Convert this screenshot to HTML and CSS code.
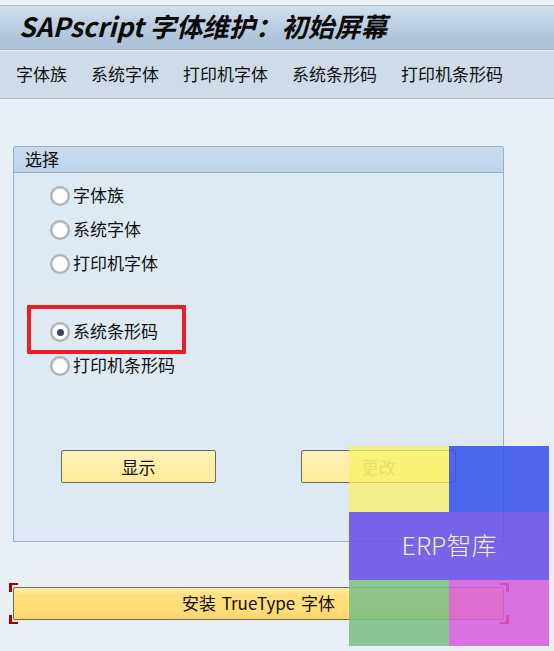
FILE: index.html
```html
<!DOCTYPE html>
<html lang="zh-CN">
<head>
    <meta charset="UTF-8">
    <meta name="viewport" content="width=device-width, initial-scale=1.0">
    <title>SAPscript 字体维护</title>
    <link rel="stylesheet" href="styles.css">
</head>
<body>
    <div class="topstrip"></div>
    <h1 class="titlebar">SAPscript 字体维护：初始屏幕</h1>
    <nav class="toolbar">
        <span>字体族</span>
        <span>系统字体</span>
        <span>打印机字体</span>
        <span>系统条形码</span>
        <span>打印机条形码</span>
    </nav>

    <main class="content">
        <section class="panel">
            <div class="panel-head">选择</div>
            <div class="panel-body">
                <div class="options">
                    <label class="option"><span class="radio"></span>字体族</label>
                    <label class="option"><span class="radio"></span>系统字体</label>
                    <label class="option"><span class="radio"></span>打印机字体</label>
                    <label class="option option-picked"><span class="radio radio-on"></span>系统条形码<span class="redbox"></span></label>
                    <label class="option"><span class="radio"></span>打印机条形码</label>
                </div>
                <div class="actions">
                    <button class="btn">显示</button>
                    <button class="btn btn-off">更改</button>
                </div>
            </div>
        </section>

        <button class="btn btn-install">
            安装 TrueType 字体
            <span class="corner c-tl"></span>
            <span class="corner c-bl"></span>
            <span class="corner c-tr"></span>
            <span class="corner c-br"></span>
        </button>
    </main>

    <div class="watermark">
        <div class="wm wm-yellow"></div>
        <div class="wm wm-blue"></div>
        <div class="wm wm-purple">ERP智库</div>
        <div class="wm wm-green"></div>
        <div class="wm wm-pink"></div>
    </div>
</body>
</html>
```

FILE: styles.css
```css
*{
    padding: 0;
    margin: 0;
    box-sizing: border-box;
}
body{
    height: 651px;
    overflow: hidden;
    position: relative;
    background-color: #e8eff7;
    font-family: "Noto Sans CJK SC", "Liberation Sans", sans-serif;
    font-size: 17px;
    color: #111;
}
.topstrip{
    height: 6px;
    background-color: #eef1f8;
    border-bottom: 1px solid #b4bccb;
}
.titlebar{
    height: 44px;
    padding-left: 19px;
    background: linear-gradient(#d3e0ed, #aec4da 75%, #abc2d9);
    border-bottom: 1px solid #9fb3c8;
    font-size: 26.4px;
    line-height: 39px;
    font-style: italic;
    font-weight: 700;
    color: #0a0a0a;
    white-space: nowrap;
}
.toolbar{
    height: 49px;
    padding-left: 16px;
    padding-bottom: 2px;
    display: flex;
    align-items: center;
    gap: 24px;
    background-color: #cfdce7;
    border-top: 1px solid #e3ebf3;
    border-bottom: 1px solid #aab9c9;
}
.content{
    padding: 47px 50px 0 13px;
}
.panel{
    border: 1px solid #95b0cf;
    border-radius: 2px 2px 0 0;
    height: 396px;
    display: flex;
    flex-direction: column;
}
.panel-head{
    height: 26px;
    padding-left: 11px;
    line-height: 23px;
    background: linear-gradient(#c9dcef, #bcd4e9);
    border-bottom: 1px solid #8fabc9;
}
.panel-body{
    flex: 1;
    background-color: #dde9f3;
    padding: 10px 0 0 36px;
    display: flex;
    flex-direction: column;
}
.options{
    display: flex;
    flex-direction: column;
    gap: 10px;
}
.option{
    height: 24px;
    padding-bottom: 2px;
    display: flex;
    align-items: center;
    gap: 3px;
    position: relative;
}
.option-picked{
    margin-top: 34px;
}
.radio{
    width: 20px;
    height: 20px;
    margin-top: 4px;
    border-radius: 50%;
    background: radial-gradient(circle, #fff 55%, #eee 70%);
    border: 2px solid #b0b0b0;
    box-shadow: inset 0 0 1px #888;
    display: flex;
    align-items: center;
    justify-content: center;
}
.radio-on::after{
    content: "";
    width: 7px;
    height: 7px;
    border-radius: 50%;
    background-color: #3d4258;
}
.redbox{
    position: absolute;
    left: -23px;
    top: -14px;
    width: 159px;
    height: 49px;
    border: 4px solid #ee1c25;
    border-radius: 1px;
}
.actions{
    margin-top: 73px;
    padding-left: 11px;
    display: flex;
    gap: 85px;
}
.btn{
    width: 155px;
    height: 33px;
    font-family: inherit;
    font-size: 17px;
    color: #111;
    border: 1px solid #6e6a5c;
    border-radius: 2px;
    background: linear-gradient(#fff3c0, #fff0ae 30%, #ffeb9c);
}
.btn-off{
    color: #aaa68c;
}
.btn-install{
    display: block;
    position: relative;
    width: 491px;
    margin-top: 45px;
    padding-bottom: 2px;
    word-spacing: 2px;
    background: linear-gradient(#ffeea8, #ffdf7c 25%, #ffdc78 80%, #ffd463);
}
.corner{
    position: absolute;
    width: 9px;
    height: 9px;
    border: 0 solid #a80000;
}
.c-tl{
    left: -5px;
    top: -5px;
    border-width: 2px 0 0 3px;
}
.c-bl{
    left: -5px;
    bottom: -5px;
    border-width: 0 0 2px 3px;
}
.c-tr{
    right: -6px;
    top: -5px;
    border-width: 2px 3px 0 0;
}
.c-br{
    right: -6px;
    bottom: -5px;
    border-width: 0 3px 2px 0;
}
.watermark{
    position: absolute;
    left: 349px;
    top: 446px;
    width: 200px;
    height: 200px;
    display: grid;
    grid-template-columns: 100px 100px;
    grid-template-rows: 66px 68px 66px;
}
.wm-yellow{
    background-color: rgba(248, 240, 100, 0.75);
}
.wm-blue{
    background-color: rgba(55, 85, 235, 0.88);
}
.wm-purple{
    grid-column: 1 / 3;
    background-color: rgba(105, 80, 230, 0.88);
    color: #f3eccb;
    font-size: 25px;
    font-weight: 300;
    text-align: center;
    line-height: 65px;
}
.wm-green{
    background-color: rgba(120, 190, 130, 0.85);
}
.wm-pink{
    background-color: rgba(215, 90, 220, 0.85);
}
```
